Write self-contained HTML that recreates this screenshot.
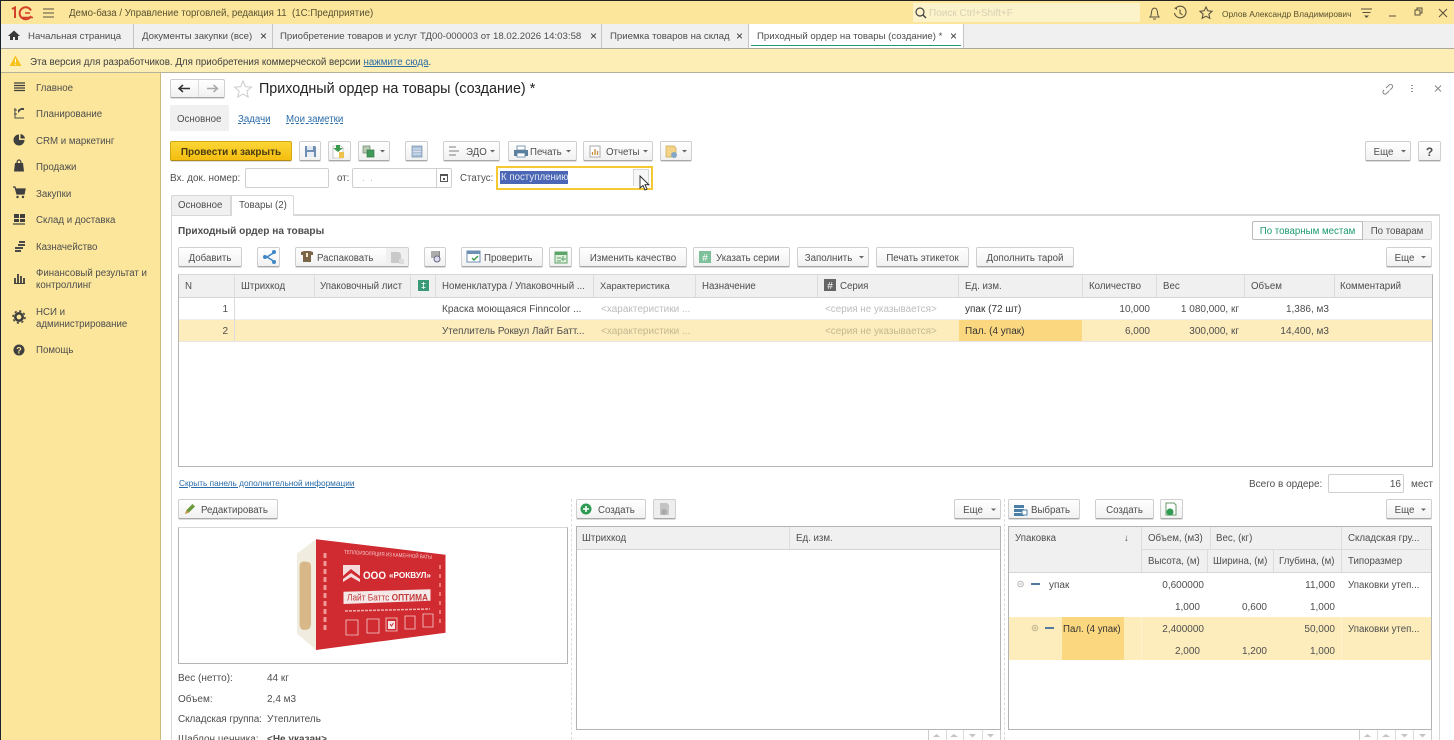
<!DOCTYPE html>
<html lang="ru"><head><meta charset="utf-8"><title>Приходный ордер на товары</title>
<style>
html,body{margin:0;padding:0;width:1454px;height:740px;overflow:hidden;background:#fff}
#p{position:relative;width:1454px;height:740px;overflow:hidden;font:9.7px/16px "Liberation Sans",sans-serif;color:#4e4e4e;filter:blur(.3px)}
#p div,#p span.t,#p a{position:absolute;white-space:nowrap}
.t{position:absolute;white-space:nowrap}
.d{font-size:10px}
.tb{font-size:9.65px}
.b{box-sizing:border-box;height:20px;border:1px solid #cfcfcf;border-bottom:1px solid #a8a8a8;border-radius:2px;background:linear-gradient(#fff,#f1f1f1);line-height:21px;text-align:center;color:#4e4e4e;box-shadow:0 1px 0 #ddd}
.in{box-sizing:border-box;border:1px solid #cfcfcf;border-radius:2px;background:#fff}
.h{background:#f0f0f0}
.vl{width:1px;background:#dcdcdc}
.g{color:#bdbdbd}
.k{color:#333}
a{color:#2a6ca8;text-decoration:underline}
svg{position:absolute;left:0;top:0}
</style></head><body><div id="p">

<!-- top -->
<div style="left:0;top:0;width:1454px;height:1px;background:#222"></div>
<div style="left:0;top:1px;width:1454px;height:23px;background:#fbe69b"></div>
<div style="left:0;top:24px;width:1454px;height:24px;background:#f0f0f0"></div>
<div style="left:0;top:48px;width:1454px;height:1px;background:#aaa79c"></div>
<div style="left:0;top:49px;width:1454px;height:23px;background:#fdeeb6"></div>
<div style="left:0;top:72px;width:1454px;height:1px;background:#b5b09a"></div>
<div style="left:0;top:73px;width:160px;height:667px;background:#fbe69b"></div>
<div style="left:160px;top:73px;width:1px;height:667px;background:#c9bb80"></div>
<div style="left:0;top:0;width:1px;height:740px;background:#1c2330"></div>

<span class="t" style="left:69px;top:6px;color:#5a5130;font-size:9.7px">Демо-база / Управление торговлей, редакция 11&nbsp; (1С:Предприятие)</span>
<div style="left:913px;top:3px;width:227px;height:19px;background:#fdf3cb"></div>
<span class="t" style="left:929px;top:6px;color:#d6d0b4;font-size:10px">Поиск Ctrl+Shift+F</span>
<span class="t" style="left:1222px;top:6px;color:#5a5130;font-size:8.4px">Орлов Александр Владимирович</span>

<!-- tabs -->
<div style="left:749px;top:24px;width:214px;height:24px;background:#fff"></div>
<div style="left:751px;top:45px;width:210px;height:1px;background:#1f9a72"></div>
<div class="vl" style="left:133px;top:24px;height:24px;background:#c5c5c5"></div>
<div class="vl" style="left:272px;top:24px;height:24px;background:#c5c5c5"></div>
<div class="vl" style="left:601px;top:24px;height:24px;background:#c5c5c5"></div>
<div class="vl" style="left:748px;top:24px;height:24px;background:#c5c5c5"></div>
<div class="vl" style="left:963px;top:24px;height:24px;background:#c5c5c5"></div>
<span class="t tb" style="left:28px;top:29px">Начальная страница</span>
<span class="t tb" style="left:142px;top:29px">Документы закупки (все)</span>
<span class="t tb" style="left:280px;top:29px">Приобретение товаров и услуг ТД00-000003 от 18.02.2026 14:03:58</span>
<span class="t tb" style="left:610px;top:29px">Приемка товаров на склад</span>
<span class="t tb" style="left:757px;top:29px">Приходный ордер на товары (создание) *</span>
<span class="t k" style="left:260px;top:28px;font-size:12px">×</span>
<span class="t k" style="left:590px;top:28px;font-size:12px">×</span>
<span class="t k" style="left:736px;top:28px;font-size:12px">×</span>
<span class="t k" style="left:950px;top:28px;font-size:12px">×</span>

<!-- warning -->
<span class="t" style="left:30px;top:55px;color:#3f3f3f;font-size:9.75px">Эта версия для разработчиков. Для приобретения коммерческой версии <a style="position:static" href="#">нажмите сюда</a>.</span>

<!-- sidebar -->
<span class="t" style="left:36px;top:81px">Главное</span>
<span class="t" style="left:36px;top:107px">Планирование</span>
<span class="t" style="left:36px;top:134px">CRM и маркетинг</span>
<span class="t" style="left:36px;top:160px">Продажи</span>
<span class="t" style="left:36px;top:187px">Закупки</span>
<span class="t" style="left:36px;top:213px">Склад и доставка</span>
<span class="t" style="left:36px;top:240px">Казначейство</span>
<span class="t" style="left:36px;top:266px">Финансовый результат и</span>
<span class="t" style="left:36px;top:278px">контроллинг</span>
<span class="t" style="left:36px;top:305px">НСИ и</span>
<span class="t" style="left:36px;top:317px">администрирование</span>
<span class="t" style="left:36px;top:343px">Помощь</span>

<!-- header -->
<div class="b" style="left:170px;top:79px;width:55px;height:19px"></div>
<div class="vl" style="left:198px;top:80px;height:17px"></div>
<span class="t" style="left:259px;top:81px;font-size:14.35px;line-height:17px;color:#222">Приходный ордер на товары (создание) *</span>
<div class="h" style="left:170px;top:105px;width:59px;height:26px"></div>
<span class="t" style="left:177px;top:112px">Основное</span>
<a href="#" style="left:238px;top:112px;text-decoration:underline dashed">Задачи</a>
<a href="#" style="left:286px;top:112px;text-decoration:underline dashed">Мои заметки</a>

<!-- command row -->
<div class="b" style="left:170px;top:141px;width:122px;background:linear-gradient(#fbd635,#f5bd10);border-color:#d4a90f;border-bottom-color:#b08a10;font-weight:bold;font-size:10px;color:#4a3c10">Провести и закрыть</div>
<div class="b" style="left:299px;top:141px;width:22px"></div>
<div class="b" style="left:328px;top:141px;width:23px"></div>
<div class="b" style="left:358px;top:141px;width:32px"></div>
<div class="b" style="left:405px;top:141px;width:23px"></div>
<div class="b" style="left:443px;top:141px;width:57px;padding-left:22px;text-align:left">ЭДО</div>
<div class="b" style="left:508px;top:141px;width:69px;padding-left:21px;text-align:left">Печать</div>
<div class="b" style="left:583px;top:141px;width:70px;padding-left:22px;text-align:left">Отчеты</div>
<div class="b" style="left:660px;top:141px;width:32px"></div>
<div class="b" style="left:1365px;top:141px;width:46px;padding-right:9px">Еще</div>
<div class="b" style="left:1418px;top:141px;width:23px;font-weight:bold;font-size:12px">?</div>

<!-- fields -->
<span class="t" style="left:170px;top:171px;font-size:10px">Вх. док. номер:</span>
<div class="in" style="left:245px;top:168px;width:84px;height:20px"></div>
<span class="t" style="left:337px;top:171px">от:</span>
<div class="in" style="left:352px;top:168px;width:100px;height:20px"></div>
<div class="vl" style="left:436px;top:169px;height:18px;background:#cfcfcf"></div>
<span class="t g" style="left:362px;top:171px">.&nbsp;&nbsp;.</span>
<span class="t" style="left:460px;top:171px">Статус:</span>
<div style="left:496px;top:166px;width:153px;height:20px;border:2px solid #f5c933;background:#fff"></div>
<div style="left:500px;top:171px;width:68px;height:13px;background:#4a66b4"></div>
<span class="t" style="left:501px;top:170px;color:#e4e8f4">К поступлению</span>
<div style="left:633px;top:169px;width:16px;height:17px;border:1px solid #d5d5d5;border-bottom:0;box-sizing:border-box;background:#f7f7f7"></div>

<!-- inner tabs -->
<div style="left:171px;top:214px;width:1269px;height:526px;border:1px solid #d8d8d8;border-bottom:0;box-sizing:border-box;border-width:2px 1px 0 1px"></div>
<div style="left:171px;top:195px;width:60px;height:20px;background:#f0f0f0;border:1px solid #d8d8d8;border-bottom:0;box-sizing:border-box;border-radius:2px 0 0 0"></div>
<div style="left:231px;top:195px;width:63px;height:21px;background:#fff;border:1px solid #d8d8d8;border-bottom:0;box-sizing:border-box;border-radius:0 2px 0 0"></div>
<span class="t" style="left:178px;top:198px">Основное</span>
<span class="t" style="left:239px;top:198px">Товары (2)</span>

<span class="t" style="left:178px;top:224px;font-weight:bold;font-size:10.1px">Приходный ордер на товары</span>
<div style="left:1252px;top:221px;width:111px;height:19px;box-sizing:border-box;border:1px solid #bbb;border-radius:2px 0 0 2px;background:#fff;color:#1d9a70;text-align:center;line-height:20px;font-size:9.7px">По товарным местам</div>
<div style="left:1363px;top:221px;width:69px;height:19px;box-sizing:border-box;border:1px solid #d5d5d5;border-left:0;border-radius:0 2px 2px 0;background:#f0f0f0;text-align:center;line-height:20px;font-size:9.7px">По товарам</div>

<!-- table toolbar -->
<div class="b" style="left:178px;top:247px;width:64px">Добавить</div>
<div class="b" style="left:257px;top:247px;width:23px"></div>
<div class="b" style="left:295px;top:247px;width:114px"></div>
<span class="t" style="left:317px;top:251px">Распаковать</span>
<div style="left:386px;top:248px;width:22px;height:18px;background:#f0f0f0"></div>
<div class="b" style="left:424px;top:247px;width:22px"></div>
<div class="b" style="left:461px;top:247px;width:82px;padding-left:22px;text-align:left">Проверить</div>
<div class="b" style="left:549px;top:247px;width:23px"></div>
<div class="b" style="left:579px;top:247px;width:108px">Изменить качество</div>
<div class="b" style="left:693px;top:247px;width:97px;padding-left:22px;text-align:left">Указать серии</div>
<div class="b" style="left:797px;top:247px;width:72px;padding-right:9px">Заполнить</div>
<div class="b" style="left:876px;top:247px;width:93px">Печать этикеток</div>
<div class="b" style="left:976px;top:247px;width:98px">Дополнить тарой</div>
<div class="b" style="left:1386px;top:247px;width:46px;padding-right:9px">Еще</div>

<!-- main table -->
<div style="left:178px;top:274px;width:1255px;height:193px;box-sizing:border-box;border:1px solid #b4b4b4;border-top-color:#d8d8d8"></div>
<div class="h" style="left:179px;top:275px;width:1253px;height:22px"></div>
<div style="left:179px;top:297px;width:1253px;height:1px;background:#d5d5d5"></div>
<div style="left:179px;top:320px;width:1253px;height:21px;background:#fdedbc"></div>
<div style="left:179px;top:319px;width:1253px;height:1px;background:#eee"></div>
<div style="left:179px;top:341px;width:1253px;height:1px;background:#e6e6e6"></div>
<div style="left:959px;top:320px;width:123px;height:21px;background:#fbd87f"></div>
<div class="vl" style="left:234px;top:275px;height:66px"></div>
<div class="vl" style="left:314px;top:275px;height:22px"></div>
<div class="vl" style="left:410px;top:275px;height:22px"></div>
<div class="vl" style="left:435px;top:275px;height:22px"></div>
<div class="vl" style="left:593px;top:275px;height:22px"></div>
<div class="vl" style="left:695px;top:275px;height:22px"></div>
<div class="vl" style="left:817px;top:275px;height:22px"></div>
<div class="vl" style="left:958px;top:275px;height:22px"></div>
<div class="vl" style="left:1082px;top:275px;height:22px"></div>
<div class="vl" style="left:1156px;top:275px;height:22px"></div>
<div class="vl" style="left:1244px;top:275px;height:22px"></div>
<div class="vl" style="left:1334px;top:275px;height:22px"></div>
<span class="t" style="left:185px;top:279px">N</span>
<span class="t" style="left:241px;top:279px">Штрихкод</span>
<span class="t" style="left:320px;top:279px">Упаковочный лист</span>
<span class="t" style="left:442px;top:279px">Номенклатура / Упаковочный ...</span>
<span class="t" style="left:600px;top:278px;font-size:9.4px">Характеристика</span>
<span class="t" style="left:702px;top:279px">Назначение</span>
<span class="t" style="left:840px;top:279px">Серия</span>
<span class="t" style="left:965px;top:279px">Ед. изм.</span>
<span class="t" style="left:1089px;top:279px">Количество</span>
<span class="t" style="left:1163px;top:279px">Вес</span>
<span class="t" style="left:1251px;top:279px">Объем</span>
<span class="t" style="left:1340px;top:279px">Комментарий</span>

<span class="t d" style="right:1226px;top:302px">1</span>
<span class="t d" style="left:442px;top:302px">Краска моющаяся Finncolor ...</span>
<span class="t d g" style="left:601px;top:302px">&lt;характеристики ...</span>
<span class="t g" style="left:825px;top:302px;font-size:9.9px">&lt;серия не указывается&gt;</span>
<span class="t d k" style="left:965px;top:302px">упак (72 шт)</span>
<span class="t d" style="right:304px;top:302px">10,000</span>
<span class="t d" style="right:215px;top:302px">1 080,000, кг</span>
<span class="t d" style="right:125px;top:302px">1,386, м3</span>

<span class="t d" style="right:1226px;top:324px">2</span>
<span class="t" style="left:442px;top:324px;font-size:9.85px">Утеплитель Роквул Лайт Батт...</span>
<span class="t d" style="left:601px;top:324px;color:#c4b890">&lt;характеристики ...</span>
<span class="t" style="left:825px;top:324px;color:#c4b890;font-size:9.9px">&lt;серия не указывается&gt;</span>
<span class="t d k" style="left:965px;top:324px">Пал. (4 упак)</span>
<span class="t d" style="right:304px;top:324px">6,000</span>
<span class="t d" style="right:215px;top:324px">300,000, кг</span>
<span class="t d" style="right:125px;top:324px">14,400, м3</span>

<!-- below table -->
<a href="#" style="left:179px;top:476px;font-size:8.3px;line-height:15px">Скрыть панель дополнительной информации</a>
<span class="t d" style="left:1249px;top:477px">Всего в ордере:</span>
<div class="in" style="left:1328px;top:474px;width:76px;height:19px"></div>
<span class="t d" style="right:53px;top:477px">16</span>
<span class="t d" style="left:1411px;top:477px">мест</span>

<!-- left panel -->
<div class="b" style="left:178px;top:499px;width:100px;padding-left:22px;text-align:left">Редактировать</div>
<div style="left:178px;top:527px;width:390px;height:137px;box-sizing:border-box;border:1px solid #b4b4b4;border-top-color:#d8d8d8"></div>
<span class="t d" style="left:178px;top:671px">Вес (нетто):</span><span class="t d" style="left:267px;top:671px">44 кг</span>
<span class="t d" style="left:178px;top:692px">Объем:</span><span class="t d" style="left:267px;top:692px">2,4 м3</span>
<span class="t d" style="left:178px;top:712px;letter-spacing:-.1px">Складская группа:</span><span class="t d" style="left:267px;top:712px">Утеплитель</span>
<span class="t d" style="left:178px;top:732px">Шаблон ценника:</span><span class="t d" style="left:267px;top:732px;font-weight:bold">&lt;Не указан&gt;</span>

<div style="left:571px;top:499px;width:0;height:241px;border-left:1px dashed #ddd"></div>
<div style="left:1004px;top:499px;width:0;height:241px;border-left:1px dashed #ddd"></div>

<!-- middle panel -->
<div class="b" style="left:576px;top:499px;width:70px;padding-left:21px;text-align:left">Создать</div>
<div class="b" style="left:653px;top:499px;width:23px;background:#eee"></div>
<div class="b" style="left:954px;top:499px;width:47px;padding-right:9px">Еще</div>
<div style="left:576px;top:526px;width:425px;height:204px;box-sizing:border-box;border:1px solid #b4b4b4"></div>
<div class="h" style="left:577px;top:527px;width:423px;height:22px"></div>
<div style="left:577px;top:549px;width:423px;height:1px;background:#d5d5d5"></div>
<div class="vl" style="left:789px;top:527px;height:22px"></div>
<span class="t" style="left:582px;top:531px">Штрихкод</span>
<span class="t" style="left:796px;top:531px">Ед. изм.</span>
<div style="left:928px;top:730px;width:73px;height:10px;background:#fff;border:solid #ccc;border-width:0 1px;box-sizing:border-box"></div>
<div class="vl" style="left:946px;top:730px;height:10px"></div>
<div class="vl" style="left:963px;top:730px;height:10px"></div>
<div class="vl" style="left:982px;top:730px;height:10px"></div>

<!-- right panel -->
<div class="b" style="left:1008px;top:499px;width:72px;padding-left:22px;text-align:left">Выбрать</div>
<div class="b" style="left:1095px;top:499px;width:59px">Создать</div>
<div class="b" style="left:1160px;top:499px;width:23px"></div>
<div class="b" style="left:1386px;top:499px;width:46px;padding-right:9px">Еще</div>
<div style="left:1008px;top:526px;width:424px;height:204px;box-sizing:border-box;border:1px solid #b4b4b4"></div>
<div class="h" style="left:1009px;top:527px;width:422px;height:45px"></div>
<div style="left:1141px;top:549px;width:290px;height:1px;background:#dcdcdc"></div>
<div style="left:1009px;top:572px;width:422px;height:1px;background:#d5d5d5"></div>
<div style="left:1009px;top:617px;width:422px;height:43px;background:#fdedbc"></div>
<div style="left:1062px;top:617px;width:62px;height:43px;background:#fbd87f"></div>
<div class="vl" style="left:1141px;top:527px;height:45px"></div>
<div class="vl" style="left:1210px;top:527px;height:22px"></div>
<div class="vl" style="left:1341px;top:527px;height:45px"></div>
<div class="vl" style="left:1207px;top:550px;height:22px"></div>
<div class="vl" style="left:1273px;top:550px;height:22px"></div>
<div class="vl" style="left:1141px;top:617px;height:43px;background:#fff2cc"></div>
<div class="vl" style="left:1341px;top:617px;height:43px;background:#fff2cc"></div>
<span class="t" style="left:1015px;top:531px">Упаковка</span>
<span class="t" style="left:1124px;top:531px">↓</span>
<span class="t" style="left:1148px;top:531px">Объем, (м3)</span>
<span class="t" style="left:1216px;top:531px">Вес, (кг)</span>
<span class="t" style="left:1348px;top:531px">Складская гру...</span>
<span class="t" style="left:1148px;top:554px">Высота, (м)</span>
<span class="t" style="left:1213px;top:554px">Ширина, (м)</span>
<span class="t" style="left:1279px;top:554px">Глубина, (м)</span>
<span class="t" style="left:1348px;top:554px">Типоразмер</span>

<span class="t d" style="left:1049px;top:578px">упак</span>
<span class="t d" style="right:250px;top:578px">0,600000</span>
<span class="t d" style="right:119px;top:578px">11,000</span>
<span class="t" style="left:1348px;top:578px">Упаковки утеп...</span>
<span class="t d" style="right:254px;top:600px">1,000</span>
<span class="t d" style="right:187px;top:600px">0,600</span>
<span class="t d" style="right:119px;top:600px">1,000</span>
<span class="t k" style="left:1063px;top:622px">Пал. (4 упак)</span>
<span class="t d" style="right:250px;top:622px">2,400000</span>
<span class="t d" style="right:119px;top:622px">50,000</span>
<span class="t" style="left:1348px;top:622px">Упаковки утеп...</span>
<span class="t d" style="right:254px;top:644px">2,000</span>
<span class="t d" style="right:187px;top:644px">1,200</span>
<span class="t d" style="right:119px;top:644px">1,000</span>
<div style="left:1359px;top:730px;width:73px;height:10px;background:#fff;border:solid #ccc;border-width:0 1px;box-sizing:border-box"></div>
<div class="vl" style="left:1377px;top:730px;height:10px"></div>
<div class="vl" style="left:1395px;top:730px;height:10px"></div>
<div class="vl" style="left:1413px;top:730px;height:10px"></div>

<!-- icons & picture -->
<svg width="1454" height="740" viewBox="0 0 1454 740" fill="none">
<!-- 1C logo -->
<g stroke="#d2402a" stroke-width="2" fill="none">
<path d="M12 9l3-1.500V18"/><path d="M31 10.500a6 6 0 1 0 0 5.500"/><path d="M22 17.500h11" stroke-width="1.500"/>
<path d="M30 13h-5" stroke-width="1.500"/>
</g>
<path d="M43 9h11M43 13h11M43 17h11" stroke="#5a5340" stroke-width="1"/>
<!-- search -->
<circle cx="920" cy="12" r="4" stroke="#444" stroke-width="1.200"/><path d="M923 15l3 3" stroke="#444" stroke-width="1.500"/>
<!-- bell -->
<path d="M1150 17c2-2 1-4 2-7 1-2.500 4-2.500 5 0 1 3 0 5 2 7zM1153 19h3" stroke="#5a5340"/>
<!-- history -->
<path d="M1176 8a5.800 5.800 0 1 1-1.500 5M1180 9.500v3.500l2.500 2" stroke="#5a5340" stroke-width="1.100"/><path d="M1174 8l3-1v3z" fill="#5a5340"/>
<!-- star -->
<path d="M1206 7l1.800 3.800 4.200.5-3.100 2.900.9 4.100-3.800-2.100-3.800 2.100.9-4.100-3.100-2.900 4.200-.5z" stroke="#5a5340" stroke-width="1.100"/>
<!-- menu -->
<path d="M1361 9h11M1362.500 12.500h8" stroke="#5a5340"/><path d="M1364 15.500h5l-2.500 2.500z" fill="#5a5340"/>
<path d="M1389 16h7" stroke="#5a5340"/>
<path d="M1415 10h5v5h-5zM1417 10V8h5v5h-2" stroke="#5a5340"/>
<path d="M1439 9l8 8M1447 9l-8 8" stroke="#5a5340" stroke-width="1.100"/>
<!-- home -->
<path d="M8 36l6-5.500 6 5.500h-2v4h-3v-3h-2v3h-3v-4z" fill="#3a3a3a"/>
<!-- warning -->
<path d="M15.500 55.500L21.500 66h-12z" fill="#f6c21c"/><path d="M15.500 59v3.500M15.500 63.800v1" stroke="#fff"/>
<!-- sidebar icons -->
<path d="M14 83h11M14 85.500h11M14 88h11M14 90.500h11" stroke="#3f3f3f" stroke-width="1.300"/>
<path d="M15 108v10h8M22 118l2 0M14 110h3M14 114h3" stroke="#4a4a4a"/><path d="M18 113l3-3h3v-2h-3l-3 2z" fill="#4a4a4a"/>
<path d="M19 134.500a5.500 5.500 0 1 0 5.500 5.500H19z" fill="#3f3f3f"/><path d="M20.500 134a5 5 0 0 1 4.500 4.500h-4.500z" fill="#3f3f3f"/>
<path d="M15 163h8l1 8.500h-10z" fill="#3f3f3f"/><path d="M17 163c0-4 4-4 4 0" stroke="#3f3f3f" stroke-width="1.200"/>
<path d="M13 187h2l2 7h7l1-5H16" stroke="#3f3f3f" stroke-width="1.300"/><path d="M16 189h9l-1 5h-7z" fill="#3f3f3f"/><circle cx="17.500" cy="197" r="1.200" fill="#3f3f3f"/><circle cx="23" cy="197" r="1.200" fill="#3f3f3f"/>
<path d="M14 214h5v4h-5zM20 214h5v4h-5zM14 219h5v3h-5zM20 219h5v3h-5z" fill="#3f3f3f"/><path d="M13 224h12" stroke="#3f3f3f" stroke-width="1.200"/>
<path d="M19 241h6v2h-6zM18 244h7v2h-7zM15 247h8v2h-8zM15 250h6v2h-6z" fill="#4a4a4a"/>
<path d="M15 283v-5M18 283v-9M21 283v-7M24 283v-5" stroke="#3f3f3f" stroke-width="1.800"/><path d="M14 283.500h11" stroke="#3f3f3f"/>
<circle cx="19" cy="317" r="3.700" stroke="#3f3f3f" stroke-width="2.600"/><circle cx="19" cy="317" r="6" stroke="#3f3f3f" stroke-width="1.500" stroke-dasharray="2.200 2.500"/>
<circle cx="19" cy="350" r="5.500" fill="#3f3f3f"/><text x="19" y="353.500" font-family="Liberation Sans" font-size="9" font-weight="bold" fill="#fbe69b" text-anchor="middle">?</text>
<!-- nav arrows -->
<path d="M179 88.500h11M183 85l-4 3.500 4 3.500" stroke="#333" stroke-width="1.500"/>
<path d="M207 88.500h10M213.500 85l4 3.500-4 3.500" stroke="#aaa" stroke-width="1.500"/>
<path d="M243 81l2.400 5.600 6 .5-4.600 4 1.400 6-5.200-3.200-5.200 3.200 1.400-6-4.600-4 6-.5z" stroke="#ccc"/>
<!-- window icons -->
<path d="M1386 88l3-3a2 2 0 0 1 3 0 2 2 0 0 1 0 3l-2 2M1384 90l-.5.500a2 2 0 0 0 3 3l3-3" stroke="#888"/>
<path d="M1412 85v1M1412 88v1M1412 91v1" stroke="#777" stroke-width="1.600"/>
<path d="M1435 85.500l6 6M1441 85.500l-6 6" stroke="#888"/>
<!-- save etc -->
<path d="M305 146h10l1 1v10h-11z" fill="#6d8fb4"/><path d="M307 146h6v4h-6z" fill="#dfe8f0"/><path d="M307 152h7v5h-7z" fill="#e8eef4"/>
<path d="M333 146h8l2 2v10h-10z" fill="#fff" stroke="#aaa" stroke-width=".6"/><path d="M336 145h4v3h3l-5 4-5-4h3z" fill="#3b9a4c"/><path d="M339 152h5v6h-5z" fill="#eec24a"/>
<path d="M363 146h7v7h-7z" fill="#b9c9b4" stroke="#6a8a6a" stroke-width=".7"/><path d="M367 150h7v7h-7z" fill="#3f9a58" stroke="#3b7a48" stroke-width=".7"/><path d="M380 150l5 0-2.500 2.500z" fill="#666"/>
<path d="M412 146h10v11h-10z" fill="#a8bfd6" stroke="#7a93ad" stroke-width=".7"/><path d="M413 149h8M413 151.500h8M413 154h8" stroke="#eef" stroke-width=".8"/>
<path d="M449 147h7M449 151h10M449 155h7" stroke="#999" stroke-width="1.300"/><path d="M490 150l5 0-2.500 2.500z" fill="#666"/>
<path d="M514 150h14v6h-14z" fill="#5c7f9f"/><path d="M517 146h8v4h-8zM517 153h8v4h-8z" fill="#fff" stroke="#5c7f9f" stroke-width=".8"/><path d="M566 150l5 0-2.500 2.500z" fill="#666"/>
<path d="M590 146h10v11h-10z" fill="#fff" stroke="#aaa"/><path d="M592.500 155v-3M595 155v-6M597.500 155v-4" stroke="#c98a3c" stroke-width="1.300"/><path d="M643 150l5 0-2.500 2.500z" fill="#666"/>
<path d="M666 146h8l2 2v9h-10z" fill="#f3d486" stroke="#c8a75a" stroke-width=".7"/><circle cx="674" cy="155" r="3" fill="#86a8c8"/><path d="M682 150l5 0-2.500 2.500z" fill="#666"/>
<path d="M1401 150l5 0-2.500 2.500z" fill="#666"/>
<!-- calendar -->
<path d="M440.500 174.500h7v7h-7z" stroke="#555"/><path d="M440 174h8v2h-8zM443 178h2v2h-2z" fill="#555"/>
<!-- cursor -->
<path d="M640 176v12l3-2.500 2 4.500 2-1-2-4.300h3.800z" fill="#fff" stroke="#222" stroke-width=".9"/>
<!-- toolbar icons -->
<path d="M275 252l-8 5 8 5" stroke="#3f86c6" stroke-width="1.500"/><circle cx="265" cy="257" r="2" fill="#3f86c6"/><circle cx="274" cy="252" r="2" fill="#3f86c6"/><circle cx="274" cy="262" r="2" fill="#3f86c6"/>
<path d="M301 252l3-1h6l3 1v3h-2v7h-8v-7h-2z" fill="#7a6549"/><path d="M306 253h2v4h-2z" fill="#f5e6c8"/>
<path d="M391 252h8l2 2v9h-10z" fill="#c9c9c9"/><path d="M399 259h5v5h-5z" fill="#ddd"/>
<path d="M431 251h9v7h-9z" fill="#888"/><path d="M432 251v7M434 251v7M436 251v7M438 251v7" stroke="#eee" stroke-width=".7"/><circle cx="437" cy="259" r="3" stroke="#668" fill="#dde"/>
<path d="M467 251h13v11h-13z" fill="#fff" stroke="#6d8fb4"/><path d="M467 251h13v3h-13z" fill="#6d8fb4"/><path d="M472 258l2 2 4-4" stroke="#3b9a4c" stroke-width="1.500"/>
<path d="M555 252h12v11h-12z" fill="#dfeedd" stroke="#5da468"/><path d="M555 252h12v3h-12z" fill="#5da468"/><path d="M557 258h4M557 261h4M563 256v5M561 259h5" stroke="#5da468"/>
<rect x="699" y="251" width="12" height="12" fill="#7dc09a"/><text x="705" y="261" font-family="Liberation Sans" font-size="10" fill="#fff" text-anchor="middle">#</text>
<path d="M859 256l5 0-2.500 2.500z" fill="#666"/><path d="M1421 256l5 0-2.500 2.500z" fill="#666"/>
<rect x="418" y="280" width="11" height="11" fill="#3a9a78"/><path d="M423.500 282v7M421.500 283.500h4M421.500 287.500h4" stroke="#fff" stroke-width=".8"/>
<rect x="824" y="279" width="12" height="12" fill="#666"/><text x="830" y="289" font-family="Liberation Sans" font-size="10" fill="#fff" text-anchor="middle">#</text>
<!-- edit pencil -->
<path d="M185 514l1.500-4 6-6 2.500 2.500-6 6z" fill="#6a9a3c"/><path d="M185 514l1.500-4 2.500 2.500z" fill="#c9954c"/>
<!-- create -->
<circle cx="586" cy="509" r="5.500" fill="#2f9a52"/><path d="M583 509h6M586 506v6" stroke="#fff" stroke-width="1.600"/>
<path d="M660 503h7l2 2v10h-9z" fill="#c4c4c4"/><circle cx="664" cy="512" r="3" fill="#aaa"/>
<path d="M991 508.500l5 0-2.500 2.500z" fill="#666"/>
<path d="M1014 505h10v3h-10zM1014 509h10v3h-10zM1014 513h10v3h-10z" fill="#4a7fa8"/><path d="M1022 510h5v5h-5z" stroke="#4a7fa8" fill="#fff"/>
<path d="M1166 503h8l2 2v10h-10z" fill="#fff" stroke="#6a9a6a"/><circle cx="1170" cy="512" r="3.500" fill="#2f9a52"/>
<path d="M1421 508.500l5 0-2.500 2.500z" fill="#666"/>
<!-- tree -->
<circle cx="1020.500" cy="584" r="2.800" stroke="#bbb"/><path d="M1019 584h3" stroke="#bbb"/>
<path d="M1031 584h9" stroke="#54799e" stroke-width="2"/>
<circle cx="1035" cy="628" r="2.800" stroke="#c4b890"/><path d="M1033.500 628h3M1035 626.500v3" stroke="#c4b890"/>
<path d="M1045 628h9" stroke="#54799e" stroke-width="2"/>
<!-- pager arrows -->
<g fill="#c4c4c4">
<path d="M933 737l3.500-3 3.500 3zM950 737l4-3 4 3zM969 734h7l-3.500 3.500zM987 734h7l-3.500 3.500z"/>
<path d="M1364 737l3.500-3 3.500 3zM1382 737l4-3 4 3zM1401 734h7l-3.500 3.500zM1419 734h7l-3.500 3.500z"/>
</g>
<!-- product -->
<path d="M297 553.500L316 539.300V650L297 633.500z" fill="#f1ece0"/>
<path d="M299.500 567q0-6 5-5.500l3.500.5q3 .5 3 5v56q0 6-3.500 6.500l-3.500.500q-4.500-.5-4.500-6z" fill="#d8b788"/>
<path d="M316 539.300L445.500 554.700V632.700L316 650z" fill="#cf2b30"/>
<path d="M325 553v80" stroke="#e99" stroke-width="3" stroke-dasharray="5 3"/>
<path d="M440 565v60" stroke="#e77" stroke-width="2" stroke-dasharray="4 5"/>
<g transform="matrix(1 .06 0 1 0 0)">
<text x="344" y="533" font-family="Liberation Sans" font-size="5.500" fill="#f4c8c8" textLength="88" lengthAdjust="spacingAndGlyphs">ТЕПЛОИЗОЛЯЦИЯ ИЗ КАМЕННОЙ ВАТЫ</text>
</g>
<path d="M343 565h17v18h-17z" fill="#f4dcdc"/><path d="M343 576l8-7 9 7v3l-9-6-8 6zM343 582l8-5 9 5v1h-17z" fill="#cf2b30"/>
<text x="363" y="579" font-family="Liberation Sans" font-size="11" font-weight="bold" fill="#fff" textLength="23" lengthAdjust="spacingAndGlyphs">ООО</text>
<text x="389" y="578" font-family="Liberation Sans" font-size="8" font-weight="bold" fill="#fff" textLength="42" lengthAdjust="spacingAndGlyphs">«РОКВУЛ»</text>
<path d="M343.500 591.700L430.500 589.300V600.700L343.500 604z" fill="#f5e8e8"/>
<text x="347" y="600.500" font-family="Liberation Sans" font-size="9" fill="#c33a3a" textLength="81" lengthAdjust="spacingAndGlyphs">Лайт Баттс <tspan font-weight="bold">ОПТИМА</tspan></text>
<path d="M345 611l85-2" stroke="#f0b0b0" stroke-width="1.500" stroke-dasharray="3 1"/>
<g stroke="#f5d0d0" fill="none" stroke-width=".8">
<path d="M346 620h12v15h-12zM367 619h12v14h-12zM386 618h11v13h-11zM405 616h10v13h-10zM423 614h10v13h-10z"/>
</g>
<path d="M388 621h7v8h-7z" fill="#f5e8e8"/>
<path d="M390 624l1.500 2 2-3" stroke="#c33"/>
</svg>
</div></body></html>
